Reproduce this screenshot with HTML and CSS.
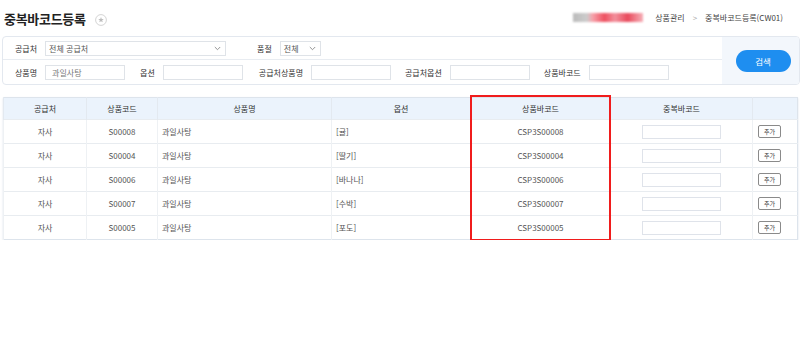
FILE: index.html
```html
<!DOCTYPE html>
<html lang="ko">
<head>
    <meta charset="UTF-8">
    <meta name="viewport" content="width=device-width, initial-scale=1.0">
    <title>중복바코드등록</title>
    <link rel="stylesheet" href="styles.css">
</head>
<body>
    <!-- 상단 제목 / 경로 -->
    <header class="top">
        <div class="titulo">
            <h1>중복바코드등록</h1>
            <span class="fav">
                <svg width="12" height="12" viewBox="0 0 12 12">
                    <circle cx="6" cy="6" r="5.4" fill="#fff" stroke="#cfcfcf" stroke-width="0.9"/>
                    <path d="M6 3.1 L6.75 5.05 L8.8 5.1 L7.2 6.35 L7.75 8.35 L6 7.2 L4.25 8.35 L4.8 6.35 L3.2 5.1 L5.25 5.05 Z" fill="#bdbdbd"/>
                </svg>
            </span>
        </div>
        <nav class="ruta">
            <span class="borroso"></span>
            <span>상품관리</span>
            <span class="sep">&gt;</span>
            <span>중복바코드등록(CW01)</span>
        </nav>
    </header>

    <!-- 검색 조건 -->
    <section class="busca">
        <div class="campos">
            <div class="fila">
                <label class="lbl">공급처</label>
                <div class="sel sel-ancho">
                    <span>전체 공급처</span>
                    <svg width="7" height="5" viewBox="0 0 7 5"><path d="M0.8 1 L3.5 3.7 L6.2 1" fill="none" stroke="#888" stroke-width="0.9"/></svg>
                </div>
                <label class="lbl lbl-pumjeol">품절</label>
                <div class="sel sel-corto">
                    <span>전체</span>
                    <svg width="7" height="5" viewBox="0 0 7 5"><path d="M0.8 1 L3.5 3.7 L6.2 1" fill="none" stroke="#888" stroke-width="0.9"/></svg>
                </div>
            </div>
            <div class="fila">
                <label class="lbl">상품명</label>
                <input class="inp" type="text" value="과일사탕">
                <label class="lbl l2">옵션</label>
                <input class="inp" type="text">
                <label class="lbl l3">공급처상품명</label>
                <input class="inp" type="text">
                <label class="lbl l4">공급처옵션</label>
                <input class="inp" type="text">
                <label class="lbl l5">상품바코드</label>
                <input class="inp" type="text">
            </div>
        </div>
        <div class="accion">
            <button class="btn-buscar">검색</button>
        </div>
    </section>

    <!-- 결과 목록 -->
    <div class="tabla-wrap">
        <table class="tabla">
            <colgroup>
                <col class="c1"><col class="c2"><col class="c3"><col class="c4">
                <col class="c5"><col class="c6"><col class="c7">
            </colgroup>
            <thead>
                <tr>
                    <th>공급처</th>
                    <th>상품코드</th>
                    <th>상품명</th>
                    <th>옵션</th>
                    <th>상품바코드</th>
                    <th>중복바코드</th>
                    <th></th>
                </tr>
            </thead>
            <tbody>
                <tr>
                    <td class="centro">자사</td><td class="centro">S00008</td><td>과일사탕</td><td>[귤]</td>
                    <td class="centro">CSP3S00008</td><td class="centro"><input class="inp-dup" type="text"></td>
                    <td><button class="btn-add">추가</button></td>
                </tr>
                <tr>
                    <td class="centro">자사</td><td class="centro">S00004</td><td>과일사탕</td><td>[딸기]</td>
                    <td class="centro">CSP3S00004</td><td class="centro"><input class="inp-dup" type="text"></td>
                    <td><button class="btn-add">추가</button></td>
                </tr>
                <tr>
                    <td class="centro">자사</td><td class="centro">S00006</td><td>과일사탕</td><td>[바나나]</td>
                    <td class="centro">CSP3S00006</td><td class="centro"><input class="inp-dup" type="text"></td>
                    <td><button class="btn-add">추가</button></td>
                </tr>
                <tr>
                    <td class="centro">자사</td><td class="centro">S00007</td><td>과일사탕</td><td>[수박]</td>
                    <td class="centro">CSP3S00007</td><td class="centro"><input class="inp-dup" type="text"></td>
                    <td><button class="btn-add">추가</button></td>
                </tr>
                <tr>
                    <td class="centro">자사</td><td class="centro">S00005</td><td>과일사탕</td><td>[포도]</td>
                    <td class="centro">CSP3S00005</td><td class="centro"><input class="inp-dup" type="text"></td>
                    <td><button class="btn-add">추가</button></td>
                </tr>
            </tbody>
        </table>
        <!-- 강조 박스 -->
        <div class="marca"></div>
    </div>
</body>
</html>
```

FILE: styles.css
```css
body {
    margin: 0;
    width: 800px;
    background: #fff;
    font-family: 'Noto Sans CJK KR', 'Noto Sans', sans-serif;
    color: #444;
    font-size: 8px;
}

/* 상단 */
.top {
    height: 36px;
    display: flex;
    align-items: center;
    justify-content: space-between;
    padding: 0 17px 0 4px;
}
.titulo {
    display: flex;
    align-items: center;
    gap: 9px;
}
.titulo h1 {
    margin: 0;
    font-size: 13px;
    font-weight: bold;
    color: #222;
    letter-spacing: -0.3px;
}
.fav {
    display: flex;
    margin-top: 3px;
}
.ruta {
    display: flex;
    align-items: center;
    gap: 6px;
    color: #444;
    margin-top: -2px;
}
.ruta .sep {
    color: #aaa;
    padding: 0 2px;
}
.borroso {
    width: 70px;
    height: 9px;
    margin-right: 6px;
    background: linear-gradient(90deg, #bbb 0%, #ccc 20%, #f7a1aa 28%, #ee5060 45%, #f2909c 60%, #e94a5c 78%, #f6b0b8 100%);
    filter: blur(1.2px);
}

/* 검색 */
.busca {
    margin-left: 2px;
    border: 1px solid #e3e8ef;
    border-radius: 4px;
    display: flex;
    height: 47px;
    overflow: hidden;
}
.campos {
    flex: 1;
    display: flex;
    flex-direction: column;
}
.fila {
    display: flex;
    align-items: center;
    padding-left: 12px;
    height: 22px;
}
.fila + .fila {
    border-top: 1px solid #e8ecf1;
    height: 24px;
}
.lbl {
    color: #333;
    margin-right: 8px;
    white-space: nowrap;
}
.lbl-pumjeol { margin-left: 31px; }
.l2 { margin-left: 15px; }
.l3 { margin-left: 16px; }
.l4 { margin-left: 14px; }
.l5 { margin-left: 14px; }
.sel {
    height: 15px;
    box-sizing: border-box;
    border: 1px solid #dfe3e8;
    display: flex;
    align-items: center;
    justify-content: space-between;
    padding: 0 4px 0 3px;
    color: #555;
}
.sel-ancho { width: 181px; }
.sel-corto { width: 41px; }
.inp {
    width: 80px;
    height: 15px;
    box-sizing: border-box;
    border: 1px solid #dfe3e8;
    font-family: inherit;
    font-size: 8px;
    color: #777;
    padding: 0 6px;
    outline: none;
}
.accion {
    width: 77px;
    background: #f3f7fc;
    display: flex;
    align-items: center;
    justify-content: center;
}
.btn-buscar {
    width: 55px;
    height: 22px;
    border: none;
    border-radius: 11px;
    background: #1e8ef0;
    color: #fff;
    font-family: inherit;
    font-size: 8.5px;
    margin-left: 5px;
}

/* 테이블 */
.tabla-wrap {
    position: relative;
    margin: 12px 3px 0 3px;
}
.tabla {
    width: 794px;
    border-collapse: collapse;
    border: 1px solid #dde4ec;
    box-shadow: 0 1px 2px #dde4ec;
    table-layout: fixed;
}
.tabla th {
    background: #ebf3fc;
    height: 21px;
    font-weight: normal;
    color: #333;
    border-left: 1px solid #e3e9f0;
    padding: 0;
}
.tabla td {
    height: 23px;
    border-top: 1px solid #e8ecf0;
    border-left: 1px solid #eef1f4;
    padding: 0 0 0 4px;
    color: #555;
}
.tabla td.centro {
    text-align: center;
    padding: 0;
}
.c1 { width: 83px; }
.c2 { width: 71px; }
.c3 { width: 174px; }
.c4 { width: 139px; }
.c5 { width: 140px; }
.c6 { width: 142px; }
.c7 { width: 45px; }
.inp-dup {
    width: 79px;
    height: 14px;
    box-sizing: border-box;
    border: 1px solid #dfe3ea;
    outline: none;
    display: block;
    margin: 0 auto;
}
.btn-add {
    width: 23px;
    height: 13px;
    padding: 0;
    border: 1px solid #8a8a8a;
    border-radius: 2px;
    background: #fff;
    font-family: inherit;
    font-size: 6px;
    color: #333;
    margin-left: 1px;
}
.marca {
    position: absolute;
    left: 467px;
    top: -2px;
    width: 141px;
    height: 146px;
    box-sizing: border-box;
    border: 2px solid #f01c1c;
    pointer-events: none;
}
```
